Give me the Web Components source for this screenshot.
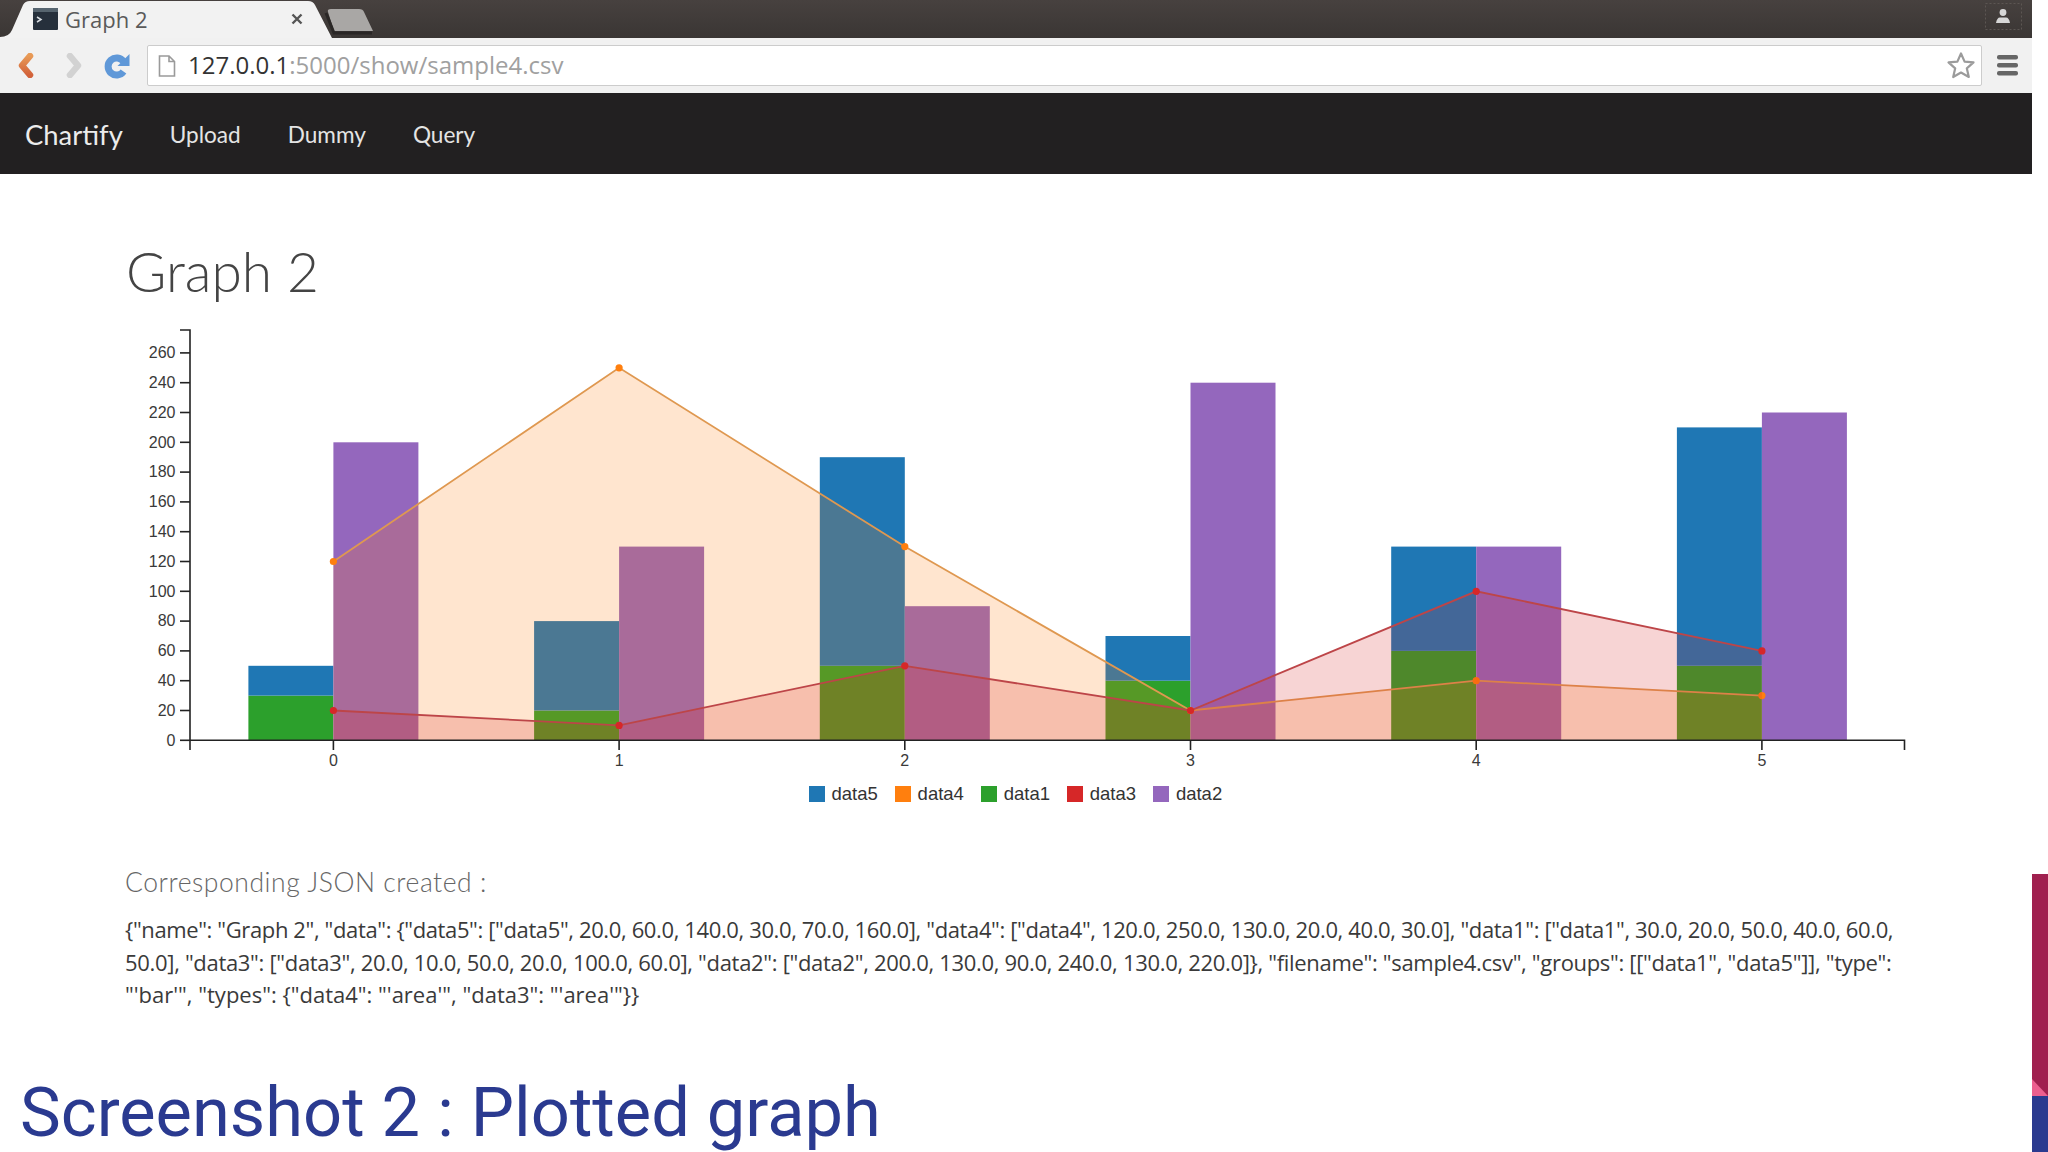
<!doctype html>
<html>
<head>
<meta charset="utf-8">
<title>Graph 2</title>
<style>
  html, body { margin: 0; background: #fff; }
  body { width: 2048px; height: 1152px; overflow: hidden; }
</style>
</head>
<body>
<slide-frame>
  <browser-chrome title="Graph 2" host="127.0.0.1" path=":5000/show/sample4.csv"></browser-chrome>
  <site-nav brand="Chartify">
    <a>Upload</a>
    <a>Dummy</a>
    <a>Query</a>
  </site-nav>
  <graph-page heading="Graph 2" sub="Corresponding JSON created :">
    <bar-area-chart></bar-area-chart>
    <div>{"name": "Graph 2", "data": {"data5": ["data5", 20.0, 60.0, 140.0, 30.0, 70.0, 160.0], "data4": ["data4", 120.0, 250.0, 130.0, 20.0, 40.0, 30.0], "data1": ["data1", 30.0, 20.0, 50.0, 40.0, 60.0,</div>
    <div>50.0], "data3": ["data3", 20.0, 10.0, 50.0, 20.0, 100.0, 60.0], "data2": ["data2", 200.0, 130.0, 90.0, 240.0, 130.0, 220.0]}, "filename": "sample4.csv", "groups": [["data1", "data5"]], "type":</div>
    <div>"'bar'", "types": {"data4": "'area'", "data3": "'area'"}}</div>
  </graph-page>
  <slide-title>Screenshot 2 : Plotted graph</slide-title>
</slide-frame>

<script>
class SlideFrame extends HTMLElement {
  constructor() {
    super();
    this.attachShadow({ mode: 'open' });
    this.shadowRoot.innerHTML = `
      <style>
        :host { display: grid; grid-template-columns: 2032px 16px; grid-template-rows: 1152px; width: 2048px; height: 1152px; }
        .main { display: flex; flex-direction: column; min-width: 0; min-height: 0; }
        .accent { display: block; align-self: end; width: 16px; height: 278px; }
      </style>
      <div class="main"><slot></slot></div>
      <svg class="accent" viewBox="0 0 16 278">
        <rect width="16" height="222" fill="#a0204f"/>
        <path d="M0 205 L16 222 L0 222 Z" fill="#ec5f8f"/>
        <rect y="222" width="16" height="56" fill="#2a3a8f"/>
      </svg>
    `;
  }
}

class BrowserChrome extends HTMLElement {
  constructor() {
    super();
    this.attachShadow({ mode: 'open' });
  }

  connectedCallback() {
    this.shadowRoot.innerHTML = `
      <style>
        :host { display: block; flex: none; height: 93px; font-family: "Open Sans", "Liberation Sans", sans-serif; }
        .strip { position: relative; height: 38px; background: linear-gradient(#47413f, #3a3634); }
        .tabs { display: block; position: absolute; left: 0; top: 0; }
        .tab-row { position: relative; display: flex; align-items: center; height: 38px; padding-left: 33px; }
        .fav { display: block; }
        .title { margin-left: 7px; width: 225px; font-size: 22px; color: #5a5a5a; }
        .close { display: block; }
        .avatar { position: absolute; left: 1985px; top: 3px; display: block; }
        .bar { display: flex; align-items: center; height: 55px; background: #f1f1f1; box-sizing: border-box; padding-left: 17px; }
        .bar svg { display: block; flex: none; }
        .omni { display: flex; align-items: center; box-sizing: border-box; width: 1835px; height: 41px; margin-left: 17px; padding-left: 10px; background: #fff; border: 1px solid #ccc; border-radius: 2px; }
        .url { margin-left: 12px; padding-bottom: 2px; font-size: 24px; color: #333; white-space: nowrap; flex: 1; }
        .url span { color: #a0a0a0; }
        .menu { margin-left: 15px; }
      </style>
      <div class="strip">
        <svg class="tabs" width="400" height="38">
          <path d="M332 38 L315 5 Q313 1 308 1 L30 1 Q25 1 23 5 L12 30 Q9 37 0 37 L0 38 Z" fill="#f2f2f2"/>
          <path d="M328 12 Q327 9 331 9 L359 9 Q363 9 364 12 L373 31 L334 31 Z" fill="#a9a7a5"/>
          <path d="M326 13 L334 33 L372 33" fill="none" stroke="#2a2726" stroke-width="3"/>
        </svg>
        <div class="tab-row">
          <svg class="fav" width="25" height="22" viewBox="0 0 25 22">
            <rect width="25" height="22" rx="1" fill="#26303c"/>
            <rect width="25" height="4" fill="#56646f"/>
            <path d="M4 9 L8 11.5 L4 14" fill="none" stroke="#d8dde2" stroke-width="1.5"/>
          </svg>
          <span class="title">${this.getAttribute('title')}</span>
          <svg class="close" width="14" height="14" viewBox="0 0 14 14">
            <path d="M2.5 2.5 L11.5 11.5 M11.5 2.5 L2.5 11.5" stroke="#555" stroke-width="2.4"/>
          </svg>
        </div>
        <svg class="avatar" width="37" height="27" viewBox="0 0 37 27">
          <rect x=".5" y=".5" width="36" height="26" fill="none" stroke="#5c5653" stroke-dasharray="2 2"/>
          <circle cx="18" cy="9.5" r="3.4" fill="#d6d6d6"/>
          <path d="M11 20 Q12 14.5 15 14.5 L21 14.5 Q24 14.5 25 20 Z" fill="#d6d6d6"/>
        </svg>
      </div>
      <div class="bar">
        <svg width="17" height="25" viewBox="0 0 17 25">
          <defs><linearGradient id="back" x1="0" y1="0" x2="0" y2="1"><stop offset="0" stop-color="#e89a56"/><stop offset="1" stop-color="#d2623a"/></linearGradient></defs>
          <path d="M13 3 L5 12.5 L13 22" fill="none" stroke="url(#back)" stroke-width="6.5" stroke-linecap="round" stroke-linejoin="round"/>
        </svg>
        <svg width="16" height="25" viewBox="0 0 16 25" style="margin-left:32px">
          <path d="M4 3 L12 12.5 L4 22" fill="none" stroke="#d2d2d2" stroke-width="6.5" stroke-linecap="round" stroke-linejoin="round"/>
        </svg>
        <svg width="26" height="26" viewBox="0 0 26 26" style="margin-left:22px">
          <path d="M19.5 8.5 A8.5 8.5 0 1 0 19.5 18.5" fill="none" stroke="#5f98d8" stroke-width="7"/>
          <path d="M25.5 1 L25.5 13 L13.5 13 Z" fill="#5f98d8"/>
        </svg>
        <div class="omni">
          <svg width="18" height="22" viewBox="0 0 18 22">
            <path d="M1.5 1 L11 1 L16.5 6.5 L16.5 21 L1.5 21 Z M11 1 L11 6.5 L16.5 6.5" fill="none" stroke="#9a9a9a" stroke-width="1.6"/>
          </svg>
          <div class="url">${this.getAttribute('host')}<span>${this.getAttribute('path')}</span></div>
          <svg width="30" height="30" viewBox="0 0 30 30" style="margin-right:5px">
            <path d="M15 2.5 L18.6 10.6 L27.5 11.4 L20.8 17.3 L22.8 26 L15 21.5 L7.2 26 L9.2 17.3 L2.5 11.4 L11.4 10.6 Z" fill="#fff" stroke="#9b9b9b" stroke-width="2.2" stroke-linejoin="round"/>
          </svg>
        </div>
        <svg class="menu" width="21" height="21" viewBox="0 0 21 21">
          <rect y="0" width="21" height="4.4" rx="2" fill="#666"/>
          <rect y="8" width="21" height="4.4" rx="2" fill="#666"/>
          <rect y="16" width="21" height="4.4" rx="2" fill="#666"/>
        </svg>
      </div>
    `;
  }
}

class SiteNav extends HTMLElement {
  constructor() {
    super();
    this.attachShadow({ mode: 'open' });
  }

  connectedCallback() {
    this.shadowRoot.innerHTML = `
      <style>
        :host { display: flex; flex: none; align-items: center; box-sizing: border-box; height: 81px; padding: 2px 0 0 25px; background: #222021; color: #e4e4e4; font-family: Lato, "Liberation Sans", sans-serif; }
        .brand { font-size: 27.4px; margin-right: 47px; color: #ececec; }
        .links { display: flex; gap: 47px; font-size: 22.6px; }
        ::slotted(a) { color: #e4e4e4; }
      </style>
      <span class="brand">${this.getAttribute('brand')}</span>
      <div class="links"><slot></slot></div>
    `;
  }
}

class GraphPage extends HTMLElement {
  constructor() {
    super();
    this.attachShadow({ mode: 'open' });
  }

  connectedCallback() {
    this.shadowRoot.innerHTML = `
      <style>
        :host { display: block; flex: none; padding-left: 126px; font-family: Lato, "Liberation Sans", sans-serif; }
        h1 { margin: 65px 0 0; height: 75px; line-height: 64px; font-size: 55px; font-weight: 300; color: #444; }
        h2 { margin: 46px 0 0 -1px; height: 44px; line-height: 44px; font-size: 26.5px; letter-spacing: .55px; font-weight: 300; color: #666; }
        .json { margin: 9px 0 0 -1px; font-family: "Open Sans", Lato, sans-serif; font-size: 22px; line-height: 32.6px; color: #3a3a3a; white-space: nowrap; }
        ::slotted(div:nth-of-type(1)) { letter-spacing: -.375px; }
        ::slotted(div:nth-of-type(2)) { letter-spacing: -.315px; }
        ::slotted(div:nth-of-type(3)) { letter-spacing: 0; }
      </style>
      <h1>${this.getAttribute('heading')}</h1>
      <slot name="chart"></slot>
      <h2>${this.getAttribute('sub')}</h2>
      <div class="json"><slot></slot></div>
    `;
    const chart = this.querySelector('bar-area-chart');
    if (chart) chart.slot = 'chart';
  }
}

class BarAreaChart extends HTMLElement {
  constructor() {
    super();
    this.attachShadow({ mode: 'open' });
  }

  connectedCallback() {
    const colors = { data5: '#1f77b4', data4: '#ff7f0e', data1: '#2ca02c', data3: '#d62728', data2: '#9467bd' };
    const data = {
      data5: [20, 60, 140, 30, 70, 160],
      data4: [120, 250, 130, 20, 40, 30],
      data1: [30, 20, 50, 40, 60, 50],
      data3: [20, 10, 50, 20, 100, 60],
      data2: [200, 130, 90, 240, 130, 220],
    };
    // svg uses page coordinates, viewBox offsets them to the box in the flow
    const y0 = 740.3, yUnit = 1.49, x0 = 333.4, xStep = 285.7, barW = 85;
    const X = i => x0 + i * xStep;
    const Y = v => y0 - v * yUnit;
    let s = '';

    const rect = (x, v0, v1, fill) => `<rect x="${x}" y="${Y(v1)}" width="${barW}" height="${(v1 - v0) * yUnit}" fill="${fill}"/>`;
    for (let i = 0; i < 6; i++) {
      s += rect(X(i) - barW, 0, data.data1[i], colors.data1);
      s += rect(X(i) - barW, data.data1[i], data.data1[i] + data.data5[i], colors.data5);
      s += rect(X(i), 0, data.data2[i], colors.data2);
    }

    for (const k of ['data4', 'data3']) {
      const pts = data[k].map((v, i) => `${X(i)},${Y(v)}`).join(' ');
      s += `<polygon points="${X(0)},${y0} ${pts} ${X(5)},${y0}" fill="${colors[k]}" opacity=".2"/>`;
      s += `<polyline points="${pts}" fill="none" stroke="${k === 'data4' ? '#df9850' : '#bd4548'}" stroke-width="1.8"/>`;
      s += data[k].map((v, i) => `<circle cx="${X(i)}" cy="${Y(v)}" r="3.6" fill="${colors[k]}"/>`).join('');
    }

    // axes
    s += `<path d="M180 330 H190 V${y0} H1904.5 V750 M190 ${y0} V750" fill="none" stroke="#222" stroke-width="1.6"/>`;
    for (let v = 0; v <= 260; v += 20) {
      s += `<path d="M180 ${Y(v)} H190" stroke="#222" stroke-width="1.6"/>`;
      s += `<text x="175.5" y="${Y(v) + 5.3}" text-anchor="end">${v}</text>`;
    }
    for (let i = 0; i < 6; i++) {
      s += `<path d="M${X(i)} ${y0} V750" stroke="#222" stroke-width="1.6"/>`;
      s += `<text x="${X(i)}" y="766" text-anchor="middle">${i}</text>`;
    }

    const legend = ['data5', 'data4', 'data1', 'data3', 'data2']
      .map(k => `<span class="item"><i style="background:${colors[k]}"></i>${k}</span>`).join('');

    this.shadowRoot.innerHTML = `
      <style>
        :host { display: block; height: 500px; font-family: "Liberation Sans", Arial, sans-serif; }
        svg { display: block; }
        text { font-size: 16px; fill: #3a3a3a; }
        .legend { display: flex; gap: 17.3px; margin: 12px 0 0 683px; font-size: 18.5px; line-height: 24px; color: #333; }
        .item { display: flex; align-items: center; gap: 6.5px; }
        i { display: block; width: 16px; height: 16px; }
      </style>
      <svg width="1800" height="456" viewBox="126 314 1800 456">${s}</svg>
      <div class="legend">${legend}</div>
    `;
  }
}

class SlideTitle extends HTMLElement {
  constructor() {
    super();
    this.attachShadow({ mode: 'open' });
    this.shadowRoot.innerHTML = `
      <style>
        :host { display: block; flex: none; margin-top: 62px; padding-left: 20px; font-family: Roboto, "Liberation Sans", sans-serif; font-size: 68.6px; line-height: 80px; color: #2a3a90; }
      </style>
      <slot></slot>
    `;
  }
}

customElements.define('slide-frame', SlideFrame);
customElements.define('browser-chrome', BrowserChrome);
customElements.define('site-nav', SiteNav);
customElements.define('graph-page', GraphPage);
customElements.define('bar-area-chart', BarAreaChart);
customElements.define('slide-title', SlideTitle);
</script>
</body>
</html>
